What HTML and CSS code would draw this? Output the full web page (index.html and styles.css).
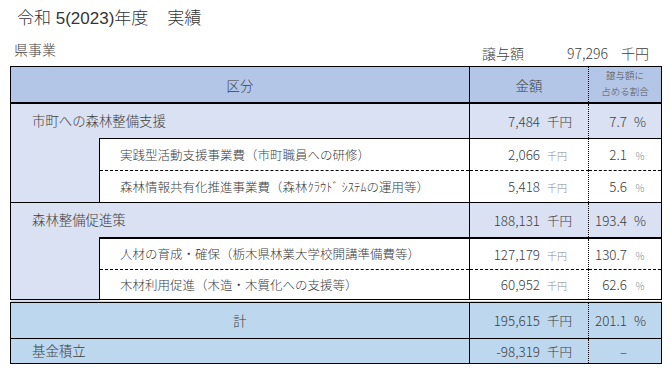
FILE: index.html
```html
<!DOCTYPE html>
<html lang="ja">
<head>
    <meta charset="UTF-8">
    <meta name="viewport" content="width=device-width, initial-scale=1.0">
    <title>令和5(2023)年度 実績</title>
    <link rel="stylesheet" href="styles.css">
</head>
<body>
    <div class="page">
        <h1 class="title">令和 5(2023)年度<span class="title-sub">実績</span></h1>

        <div class="meta">
            <span class="dept">県事業</span>
            <span class="grant">
                <span class="grant-label">譲与額</span>
                <span class="grant-num">97,296</span>
                <span class="grant-unit">千円</span>
            </span>
        </div>

        <table class="report">
            <colgroup>
                <col class="col-indent">
                <col class="col-name">
                <col class="col-amount">
                <col class="col-rate">
            </colgroup>
            <thead>
                <tr class="head-row">
                    <th colspan="2">区分</th>
                    <th class="amount">金額</th>
                    <th class="rate rate-head">譲与額に<br>占める割合</th>
                </tr>
            </thead>
            <tbody>
                <!-- 市町への森林整備支援 -->
                <tr class="group-row group-1">
                    <td colspan="2" class="label">市町への森林整備支援</td>
                    <td class="amount"><span class="num">7,484</span><span class="unit">千円</span></td>
                    <td class="rate"><span class="num">7.7</span><span class="unit">%</span></td>
                </tr>
                <tr class="item-row item-first item-1">
                    <td rowspan="2" class="indent"></td>
                    <td class="label">実践型活動支援事業費（市町職員への研修）</td>
                    <td class="amount"><span class="num">2,066</span><span class="unit">千円</span></td>
                    <td class="rate"><span class="num">2.1</span><span class="unit">%</span></td>
                </tr>
                <tr class="item-row item-second item-2">
                    <td class="label">森林情報共有化推進事業費（森林ｸﾗｳﾄﾞ ｼｽﾃﾑの運用等）</td>
                    <td class="amount"><span class="num">5,418</span><span class="unit">千円</span></td>
                    <td class="rate"><span class="num">5.6</span><span class="unit">%</span></td>
                </tr>

                <!-- 森林整備促進策 -->
                <tr class="group-row group-2">
                    <td colspan="2" class="label">森林整備促進策</td>
                    <td class="amount"><span class="num">188,131</span><span class="unit">千円</span></td>
                    <td class="rate"><span class="num">193.4</span><span class="unit">%</span></td>
                </tr>
                <tr class="item-row item-first item-3">
                    <td rowspan="2" class="indent"></td>
                    <td class="label">人材の育成・確保（栃木県林業大学校開講準備費等）</td>
                    <td class="amount"><span class="num">127,179</span><span class="unit">千円</span></td>
                    <td class="rate"><span class="num">130.7</span><span class="unit">%</span></td>
                </tr>
                <tr class="item-row item-second item-4">
                    <td class="label">木材利用促進（木造・木質化への支援等）</td>
                    <td class="amount"><span class="num">60,952</span><span class="unit">千円</span></td>
                    <td class="rate"><span class="num">62.6</span><span class="unit">%</span></td>
                </tr>

                <tr class="total-row">
                    <td colspan="2" class="total-label">計</td>
                    <td class="amount"><span class="num">195,615</span><span class="unit">千円</span></td>
                    <td class="rate"><span class="num">201.1</span><span class="unit">%</span></td>
                </tr>
                <tr class="fund-row">
                    <td colspan="2" class="label">基金積立</td>
                    <td class="amount"><span class="num">-98,319</span><span class="unit">千円</span></td>
                    <td class="rate"><span class="num">–</span><span class="unit"></span></td>
                </tr>
            </tbody>
        </table>
    </div>
</body>
</html>
```

FILE: styles.css
```css
body {
    margin: 0;
    font-family: "Noto Sans CJK JP", "Noto Sans", sans-serif;
    font-weight: 300;
    color: #404040;
    background: #fff;
}
.page {
    width: 670px;
}
.title {
    margin: 0;
    padding: 8px 0 0 17px;
    font-family: "Liberation Sans", "Noto Sans CJK JP", sans-serif;
    font-size: 17px;
    font-weight: 300;
    line-height: 21px;
    color: #333;
}
.title-sub {
    margin-left: 19px;
}
.meta {
    display: flex;
    justify-content: space-between;
    height: 37px;
    padding: 0 21px 0 14px;
}
.dept {
    font-size: 14px;
    line-height: 18px;
    padding-top: 11px;
}
.grant {
    display: flex;
    font-size: 14px;
    line-height: 18px;
    padding-top: 15px;
}
.grant-label {
    width: 60px;
}
.grant-num {
    width: 66px;
    text-align: right;
}
.grant-unit {
    margin-left: 13px;
}

/* table */
.report {
    margin-left: 10px;
    width: 652px;
    table-layout: fixed;
    border-collapse: collapse;
    border: 1px solid #000;
    font-size: 13.4px;
}
.col-indent { width: 89px; }
.col-name { width: 370px; }
.col-amount { width: 119px; }
.col-rate { width: 73px; }

.report th,
.report td {
    padding: 0;
    vertical-align: middle;
    white-space: nowrap;
}
.report th {
    font-weight: 300;
    background-color: #b4c6e7;
    border-bottom: 2px solid #000;
}
.report .amount {
    text-align: right;
    padding-right: 7px;
    border-left: 1px solid #000;
    border-right: 1px dotted #000;
}
.report th.amount {
    text-align: center;
    padding-right: 0;
}
.report .rate {
    text-align: right;
    padding-right: 13px;
}
.report th.rate-head {
    text-align: center;
    padding: 0 0 3px;
    font-size: 9.5px;
    line-height: 16px;
    color: #555;
}
.amount .unit {
    display: inline-block;
    width: 34px;
    margin-left: 7px;
    font-size: 12.5px;
    text-align: left;
}
.rate .unit {
    display: inline-block;
    width: 16px;
    margin-left: 5px;
    text-align: center;
}

.head-row { height: 36px; }
.group-1 { height: 35px; }
.group-2 { height: 36px; }
.item-1, .item-2 { height: 32px; }
.item-3 { height: 31px; }
.item-4 { height: 32px; }
.total-row { height: 37px; }
.fund-row { height: 25px; }

.group-row td {
    background-color: #d9e1f2;
    border-top: 1px solid #000;
}
.group-row .label,
.fund-row .label {
    padding-left: 21px;
    padding-bottom: 2px;
}
.item-row td {
    background-color: #fff;
}
.item-row .label {
    padding-left: 20px;
    font-size: 12.5px;
    border-left: 1px solid #000;
}
.item-first td {
    border-top: 1px solid #000;
}
.item-3 td {
    border-top-width: 2px;
}
.item-second td {
    border-top: 1px dashed #000;
}
.item-row td.indent {
    background-color: #d9e1f2;
    border-top: none;
}
.item-row .unit {
    font-size: 10px;
    color: #8a8a8a;
}
.total-row td {
    background-color: #bdd7ee;
    border-top: 4px double #000;
}
.total-label {
    text-align: center;
}
.fund-row td {
    background-color: #bdd7ee;
    border-top: 1px solid #000;
}
```
